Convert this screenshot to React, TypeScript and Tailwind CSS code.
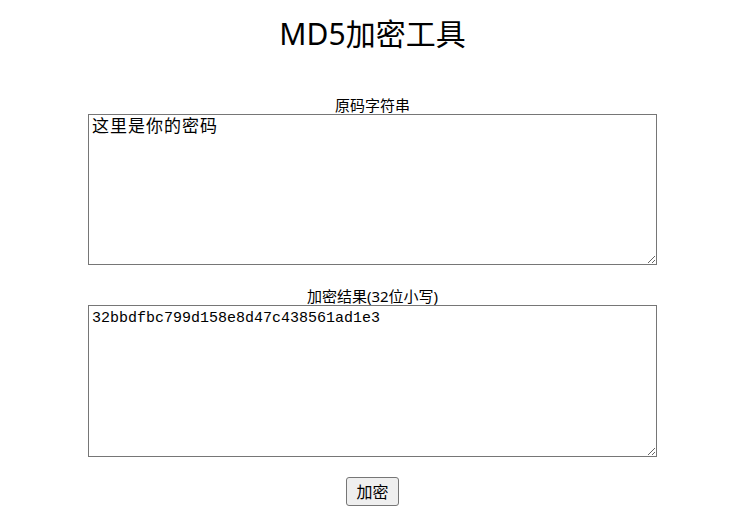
import React from "react";

export default function App() {
  return (
    <div
      className="flex flex-col items-center pr-[3px] text-black bg-white min-h-[515px]"
      style={{ fontFamily: '"Noto Sans", "Noto Sans CJK SC", sans-serif' }}
    >
      <h1 className="mt-[19px] text-[30px] leading-[30px] font-normal">MD5加密工具</h1>
      <label className="mt-[48px] block text-[15px] leading-[17px]">原码字符串</label>
      <textarea
        className="block w-[569px] h-[151px] border border-[#767676] pl-[3px] pr-[2px] pt-[3px] pb-[2px] text-[17px] leading-[20px] tracking-[1px] outline-none"
        style={{ fontFamily: '"Liberation Mono", "Noto Sans CJK SC", monospace' }}
        defaultValue="这里是你的密码"
      />
      <label className="mt-[23px] block text-[15px] leading-[17px]">加密结果(32位小写)</label>
      <textarea
        className="block w-[569px] h-[152px] border border-[#767676] pl-[3px] pr-[2px] pt-[3px] pb-[2px] text-[15px] leading-[20px] outline-none"
        style={{ fontFamily: '"Liberation Mono", "Noto Sans CJK SC", monospace' }}
        defaultValue="32bbdfbc799d158e8d47c438561ad1e3"
      />
      <button className="mt-[20px] h-[29px] w-[53px] border border-[#767676] bg-[#efefef] rounded-[3px] text-[16px] leading-none">
        加密
      </button>
    </div>
  );
}
